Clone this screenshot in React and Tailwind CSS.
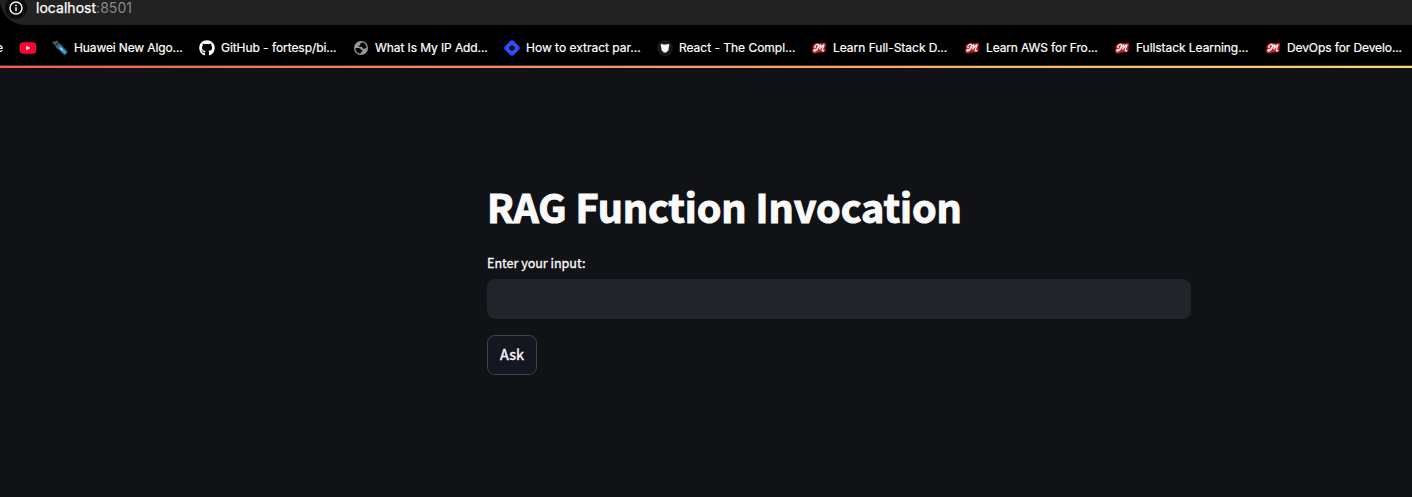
import { FaGithub } from "react-icons/fa";

function YouTubeIcon() {
  return (
    <svg width="16" height="16" viewBox="0 0 16 16" className="shrink-0">
      <rect x="0" y="2.2" width="16" height="11.6" rx="2.8" fill="#ff0033" />
      <path d="M6.2 5.8v4.4L10.2 8z" fill="#fff" />
    </svg>
  );
}

function FlashlightIcon() {
  return (
    <svg width="16" height="16" viewBox="0 0 16 16" className="shrink-0">
      <path d="M0 2.8L5.5.2 7 2.5 3.5 6z" fill="#33383b" />
      <path d="M.5 2.5L5.5 1M.5 4L6 2.5M2.5 1.5L4 5.5" stroke="#62686c" strokeWidth=".7" />
      <path d="M3.2 6.5L7.2 3l3 3-4 3.8z" fill="#46677a" />
      <path d="M5.5 8.5l3.8-3.7 6.2 6.6c.8.9-2.4 4.3-3.6 3.7z" fill="#1c6688" />
      <path d="M6.5 7.7l1.7-1.6 6.2 6.5-1.6 1.5z" fill="#49a8d1" />
      <path d="M8.5 8.2l1.8 1.7" stroke="#b5e3f3" strokeWidth="1.4" />
    </svg>
  );
}

function GlobeIcon() {
  return (
    <svg width="16" height="16" viewBox="0 0 16 16" className="shrink-0">
      <circle cx="8" cy="8" r="7" fill="#969ba1" />
      <path
        d="M9.8 2.6C7.8 2.7 7 3.6 7.3 4.6c.2.7-.5.9-1.2 1-.8.1-1 .8-.2 1.1 1 .2 2-.1 2.9.4.9.6.6 1.5 1.5 1.7 1.1.2 1.9-.7 3.3-.5.1-2.6-1.4-4.9-3.8-5.7z"
        fill="#050505"
      />
      <path
        d="M2.4 8.2c1.7-.2 3.5-.3 4.6.3.8.5.9 1.4 1.9 1.6.9.2.9 1 .2 1.4-.8.4-1.3.9-1.3 2.1-3 .1-5.4-2.3-5.4-5.4z"
        fill="#050505"
      />
    </svg>
  );
}

function DiamondIcon() {
  return (
    <svg width="16" height="16" viewBox="0 0 16 16" className="shrink-0">
      <rect x="1.8" y="1.8" width="12.4" height="12.4" rx="2.8" transform="rotate(45 8 8)" fill="#2d50ff" />
      <circle cx="8" cy="8" r="2.6" fill="#030407" />
    </svg>
  );
}

function BearIcon() {
  return (
    <svg width="16" height="16" viewBox="0 0 16 16" className="shrink-0">
      <circle cx="8" cy="8" r="8" fill="#15191c" />
      <path d="M3.8 4.6l1.2-.9 1.2.7h3.6l1.2-.7 1.2.9.1 1.6-.6 1-.2 3-1.4 1.4-.9.9H6.8l-.9-.9-1.4-1.4-.2-3-.6-1z" fill="#fafafa" />
    </svg>
  );
}

function ScriptIcon() {
  return (
    <svg width="16" height="16" viewBox="0 0 16 16" className="shrink-0">
      <path
        d="M2.6 4.6C4 3.2 6 2.6 7.6 3c1 .8 1.5.4 2.4.1.9-.2 1.4.7 2.1.1 1-.8 2.8-.3 3 1 .2 1.3-.7 2.7-.8 4 .6.8.5 2.3-.3 3.3-1 1.2-2.9 1.3-3.9.5-1 .9-2 .9-2.8.3-.7.7-1.600 1.100-2.700 1.200C2.600 13.700.9 12.700 1 10.900c.1-1 .6-1.600 1.200-2C1.100 7.900 1.300 6 2.600 4.600z"
        fill="#c41b24"
      />
      <path
        d="M4.600 7.300c-1 .2-1.300-.6-.7-1.300.9-1.100 2.600-1.800 3.400-1.500.8.400-.6 3-1.600 4.900-.8 1.500-2.200 2.300-2.800 1.600-.5-.7.2-1.500 1.500-1.700M6 9.800c1.300-2.200 2.700-4.800 3.700-5 .6 0-.7 2.800-.9 4.400 1.300-1.700 2.900-4.200 4-4.300.7.100-1.600 4-1.600 5.500 0 .8.900.7 1.500.1"
        fill="none"
        stroke="#fff"
        strokeWidth="1.15"
        strokeLinecap="round"
        strokeLinejoin="round"
      />
    </svg>
  );
}

const bookmarks = [
  { label: "Huawei New Algo...", icon: <FlashlightIcon />, size: "w-[147px]", track: "tracking-[-0.12px]" },
  { label: "GitHub - fortesp/bi...", icon: <FaGithub size={16} className="shrink-0" />, size: "w-[154px]", track: "tracking-[-0.06px]" },
  { label: "What Is My IP Add...", icon: <GlobeIcon />, size: "w-[151px]", track: "tracking-[-0.09px]" },
  { label: "How to extract par...", icon: <DiamondIcon />, size: "w-[153px]", track: "tracking-[0px]" },
  { label: "React - The Compl...", icon: <BearIcon />, size: "w-[154px]", track: "tracking-[-0.02px]" },
  { label: "Learn Full-Stack D...", icon: <ScriptIcon />, size: "w-[153px]", track: "tracking-[-0.02px]" },
  { label: "Learn AWS for Fro...", icon: <ScriptIcon />, size: "w-[150px]", track: "tracking-[-0.12px]" },
  { label: "Fullstack Learning...", icon: <ScriptIcon />, size: "w-[151px]", track: "tracking-[-0.06px]" },
  { label: "DevOps for Develo...", icon: <ScriptIcon />, size: "w-[147px]", track: "tracking-[-0.1px]" },
];

function BrowserChrome() {
  return (
    <header className="h-[65px] shrink-0 bg-black font-['Inter',sans-serif] text-white">
      <div className="flex h-[25px] items-start rounded-bl-[25px] bg-[#222222] pl-[5px]">
        <div className="-mt-[3px] flex size-[22px] items-center justify-center rounded-full bg-[#0c0c0c]">
          <svg width="14" height="14" viewBox="0 0 14 14">
            <circle cx="7" cy="7" r="6" fill="none" stroke="#f5f5f5" strokeWidth="1.5" />
            <path d="M7 6.3v3.9" stroke="#f5f5f5" strokeWidth="1.5" />
            <circle cx="7" cy="4.3" r=".9" fill="#f5f5f5" />
          </svg>
        </div>
        <div className="ml-[9px] -mt-[1px] text-[14px] leading-[18px] tracking-[0.03px]">
          <span className="[-webkit-text-stroke:0.25px]">localhost</span>
          <span className="text-[#898989]">:8501</span>
        </div>
      </div>
      <nav className="flex h-[40px] items-center overflow-hidden pt-[6px] text-[12px] leading-4 whitespace-nowrap [-webkit-text-stroke:0.2px]">
        <div className="flex w-[20px] shrink-0">
          <span className="-ml-[4px]">e</span>
        </div>
        <div className="w-[32px] shrink-0">
          <YouTubeIcon />
        </div>
        {bookmarks.map((b) => (
          <div key={b.label} className={`flex shrink-0 items-center gap-[6px] ${b.size}`}>
            {b.icon}
            <span className={b.track}>{b.label}</span>
          </div>
        ))}
      </nav>
    </header>
  );
}

export default function App() {
  return (
    <div className="flex h-[497px] w-[1412px] flex-col overflow-hidden bg-[#111216]">
      <BrowserChrome />
      <div className="h-px shrink-0 bg-[#3a3a3a]" />
      <div className="h-[2px] shrink-0 bg-linear-to-r from-[#ff574f] to-[#ffd473]" />
      <main className="ml-[487px] w-[704px] pt-[111px] font-['Noto_Sans_CJK_SC',sans-serif] text-[#fafafa]">
        <h1 className="h-[53px] text-[39.5px] leading-[53px] font-bold tracking-[-0.08px] whitespace-nowrap [-webkit-text-stroke:1.1px]">
          RAG Function Invocation
        </h1>
        <label
          htmlFor="prompt"
          className="mt-[21px] block h-[20px] text-[12.6px] leading-[20px] tracking-[-0.03px] [-webkit-text-stroke:0.3px]"
        >
          Enter your input:
        </label>
        <input id="prompt" className="mt-[6px] block h-[40px] w-full rounded-lg bg-[#23232c] px-3 outline-none" />
        <button className="mt-4 flex h-[40px] w-[50px] items-center justify-center rounded-lg border border-[#424349] bg-[#141720] pb-[2px] text-[14.4px] leading-none [-webkit-text-stroke:0.4px]">
          Ask
        </button>
      </main>
    </div>
  );
}
